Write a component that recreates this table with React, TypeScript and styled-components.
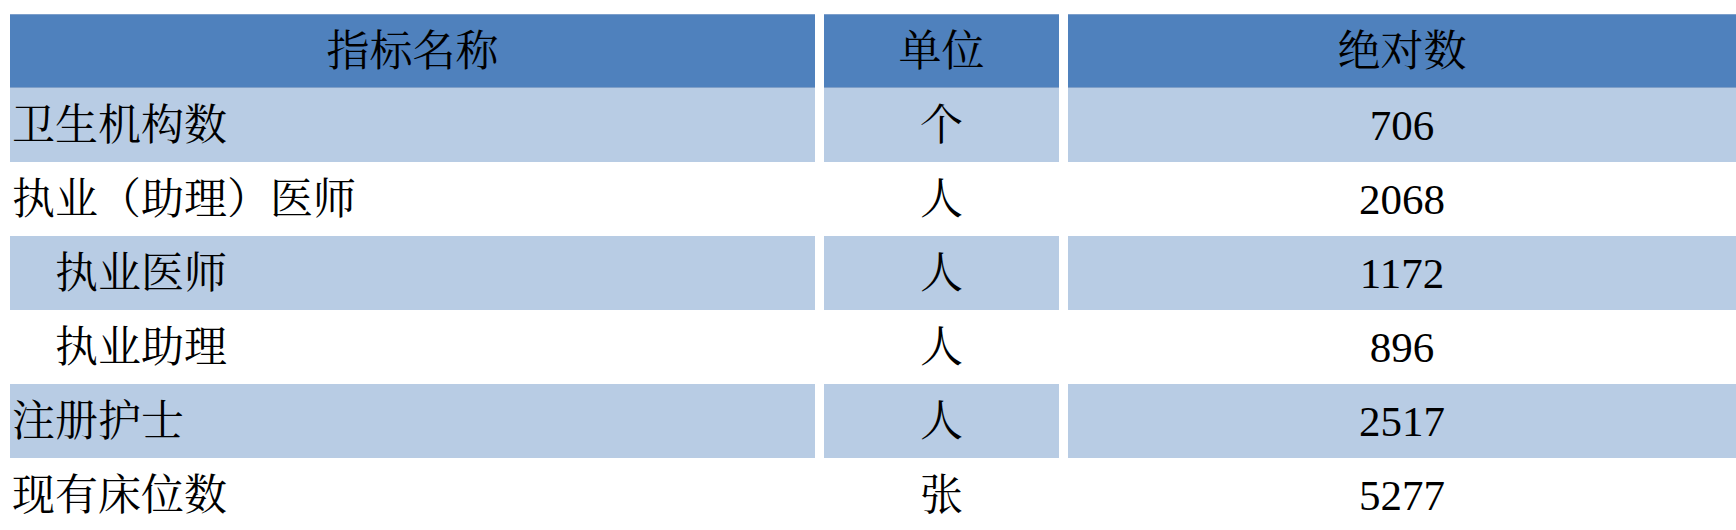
import React from "react";
import styled, { createGlobalStyle } from "styled-components";

const GlobalStyle = createGlobalStyle`
  html, body {
    margin: 0;
    padding: 0;
    background: #ffffff;
  }
  body {
    font-family: "Liberation Serif", "Noto Serif CJK SC", "Noto Sans CJK SC", serif;
  }
`;

const Page = styled.div`
  padding: 14px 0 0 10px;
  width: 1736px;
  box-sizing: border-box;
  overflow: hidden;
`;

const Table = styled.div`
  display: flex;
  flex-direction: column;
`;

const Row = styled.div`
  display: grid;
  grid-template-columns: 805px 235px 668px;
  column-gap: 9px;
  height: 74px;
`;

type CellProps = { $tone: "head" | "shade" | "plain"; $align: "left" | "center" };

const Cell = styled.div<CellProps>`
  display: flex;
  align-items: center;
  justify-content: ${(p) => (p.$align === "left" ? "flex-start" : "center")};
  padding-left: ${(p) => (p.$align === "left" ? "2px" : "0")};
  box-sizing: border-box;
  background: ${(p) =>
    p.$tone === "head" ? "#4f81bd" : p.$tone === "shade" ? "#b8cce4" : "#ffffff"};
  border-top: ${(p) => (p.$tone === "head" ? "1px solid #7d9fcb" : "none")};
  border-bottom: ${(p) => (p.$tone === "head" ? "1px solid #7f9fc8" : "none")};
  color: #000000;
  font-family: "Liberation Serif", "Noto Serif CJK SC", "Noto Sans CJK SC", serif;
  font-size: 43px;
  line-height: 1;
  white-space: pre;
`;

const rows: { name: string; unit: string; value: string }[] = [
  { name: "卫生机构数", unit: "个", value: "706" },
  { name: "执业（助理）医师", unit: "人", value: "2068" },
  { name: "\u3000执业医师", unit: "人", value: "1172" },
  { name: "\u3000执业助理", unit: "人", value: "896" },
  { name: "注册护士", unit: "人", value: "2517" },
  { name: "现有床位数", unit: "张", value: "5277" },
];

export default function App() {
  return (
    <>
      <GlobalStyle />
      <Page>
        <Table>
          <Row>
            <Cell $tone="head" $align="center">指标名称</Cell>
            <Cell $tone="head" $align="center">单位</Cell>
            <Cell $tone="head" $align="center">绝对数</Cell>
          </Row>
          {rows.map((r, i) => {
            const tone = i % 2 === 0 ? "shade" : "plain";
            return (
              <Row key={i}>
                <Cell $tone={tone} $align="left">{r.name}</Cell>
                <Cell $tone={tone} $align="center">{r.unit}</Cell>
                <Cell $tone={tone} $align="center">{r.value}</Cell>
              </Row>
            );
          })}
        </Table>
      </Page>
    </>
  );
}
